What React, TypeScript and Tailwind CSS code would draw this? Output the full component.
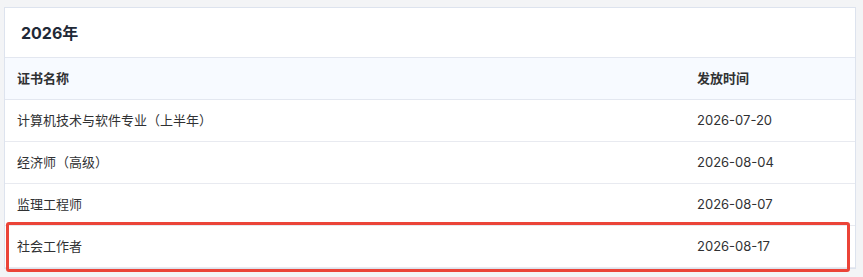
const rows = [
  { name: '计算机技术与软件专业（上半年）', date: '2026-07-20' },
  { name: '经济师（高级）', date: '2026-08-04' },
  { name: '监理工程师', date: '2026-08-07' },
  { name: '社会工作者', date: '2026-08-17', marked: true },
]

export default function App() {
  return (
    <div
      className="w-[863px] h-[277px] bg-[#f3f4f6] pt-[7px] pl-[4px]"
      style={{ fontFamily: 'Inter, "Noto Sans CJK SC", sans-serif' }}
    >
      <div className="w-[852px] bg-white border border-[#dde3ee]">
        <div className="h-[50px] flex items-center px-[16px] border-b border-[#e3e7f0]">
          <h2 className="text-[16px] font-bold text-[#1f2937]">2026年</h2>
        </div>
        <div className="h-[42px] flex items-center bg-[#f7faff] border-b border-[#e3e7f0] text-[13px] font-bold text-[#303133]">
          <div className="flex-1 pl-[12px]">证书名称</div>
          <div className="w-[158px]">发放时间</div>
        </div>
        {rows.map((r) => (
          <div
            key={r.name}
            className="relative h-[42px] flex items-center border-b border-[#e8eaf0] text-[13px] text-[#303133]"
          >
            <div className="flex-1 pl-[12px]">{r.name}</div>
            <div className="w-[158px]">{r.date}</div>
            {/* highlight frame around the last entry */}
            {r.marked && (
              <div className="absolute left-[1px] right-[5px] top-[-4px] bottom-[-5px] border-[3px] border-[#eb4438] rounded-[3px]" />
            )}
          </div>
        ))}
      </div>
    </div>
  )
}
